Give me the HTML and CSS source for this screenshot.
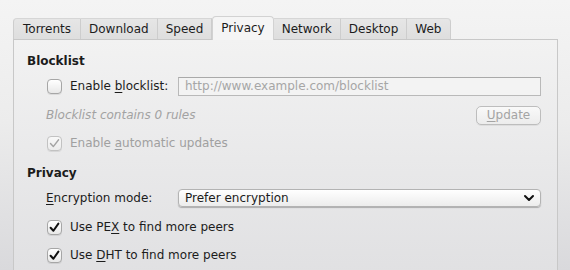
FILE: index.html
```html
<!DOCTYPE html>
<html>
    <head>
        <meta charset="UTF-8">
        <title>Preferences</title>
        <link rel="stylesheet" href="styles.css">
    </head>
    <body>
        <div class="tabs">
            <div class="tab first">Torrents</div>
            <div class="tab">Download</div>
            <div class="tab">Speed</div>
            <div class="tab active">Privacy</div>
            <div class="tab">Network</div>
            <div class="tab">Desktop</div>
            <div class="tab last">Web</div>
        </div>
        <div class="pane">
            <div class="title">Blocklist</div>
            <div class="row tall">
                <label class="lbl check">
                    <span class="box"></span>
                    <span>Enable <u>b</u>locklist:</span>
                </label>
                <div class="field">http://www.example.com/blocklist</div>
            </div>
            <div class="row">
                <span class="info">Blocklist contains 0 rules</span>
                <span class="btn"><u>U</u>pdate</span>
            </div>
            <div class="row">
                <label class="check off">
                    <span class="box on">
                        <svg viewBox="0 0 15 15" width="15" height="15"><path d="M3.5 7.6 L6.3 10.6 L11.6 3.8" fill="none" stroke="#a3a3a3" stroke-width="1.4" stroke-linecap="round" stroke-linejoin="round"/></svg>
                    </span>
                    <span>Enable <u>a</u>utomatic updates</span>
                </label>
            </div>
            <div class="title second">Privacy</div>
            <div class="row tall">
                <span class="lbl"><u>E</u>ncryption mode:</span>
                <div class="combo">
                    <span>Prefer encryption</span>
                    <svg viewBox="0 0 12 8" width="12" height="8"><path d="M2 2 L6 6 L10 2" fill="none" stroke="#111" stroke-width="2" stroke-linecap="round" stroke-linejoin="round"/></svg>
                </div>
            </div>
            <div class="row">
                <label class="check">
                    <span class="box on">
                        <svg viewBox="0 0 15 15" width="15" height="15"><path d="M3.6 7.8 L6.4 10.8 L11.4 3.6" fill="none" stroke="#111" stroke-width="2" stroke-linecap="round" stroke-linejoin="round"/></svg>
                    </span>
                    <span>Use PE<u>X</u> to find more peers</span>
                </label>
            </div>
            <div class="row">
                <label class="check">
                    <span class="box on">
                        <svg viewBox="0 0 15 15" width="15" height="15"><path d="M3.6 7.8 L6.4 10.8 L11.4 3.6" fill="none" stroke="#111" stroke-width="2" stroke-linecap="round" stroke-linejoin="round"/></svg>
                    </span>
                    <span>Use <u>D</u>HT to find more peers</span>
                </label>
            </div>
        </div>
    </body>
</html>
```

FILE: styles.css
```css
*{
    margin:0;
    padding:0;
    box-sizing:border-box;
}
html,body{
    height:100%;
}
body{
    font-family:"DejaVu Sans",sans-serif;
    font-size:12px;
    color:#1c1c1c;
    background:linear-gradient(#f4f4f4,#ececec 45%,#d9d9dc);
    overflow:hidden;
}
u{
    text-decoration:underline;
    text-underline-offset:2px;
}
.tabs{
    display:flex;
    align-items:flex-end;
    padding-left:13px;
    margin-top:15px;
    height:24px;
}
.tab{
    height:21px;
    line-height:21px;
    padding:0 8px;
    background:linear-gradient(#e6e6e6,#dedede);
    border-top:1px solid #d6d6d6;
    border-right:1px solid #cdcdcd;
}
.tab.first{
    padding:0 9px;
    border-left:1px solid #cdcdcd;
    border-top-left-radius:4px;
}
.tab.last{
    border-top-right-radius:4px;
}
.tab.active{
    height:24px;
    line-height:23px;
    background:#f5f5f5;
    border:1px solid #d2d2d2;
    border-bottom:none;
    border-radius:4px 4px 0 0;
    margin-bottom:-1px;
    position:relative;
    z-index:1;
}
.pane{
    margin:0 12px 0 13px;
    border:1px solid #c8c8c8;
    border-bottom:none;
    height:240px;
    padding:11px 16px 0 13px;
    background:linear-gradient(#f2f2f2,#e0e0e2);
}
.title{
    height:20px;
    line-height:20px;
    font-weight:bold;
}
.title.second{
    margin-top:6px;
}
.row{
    display:flex;
    align-items:center;
    height:28px;
    padding-left:19px;
}
.row.tall{
    height:30px;
}
.lbl{
    width:132px;
    flex:none;
}
.check{
    display:flex;
    align-items:center;
    gap:8px;
    margin-left:1px;
}
.row.tall .check{
    width:131px;
}
.box{
    width:15px;
    height:15px;
    border:1px solid #a6a6a6;
    border-radius:4px;
    background:linear-gradient(#ffffff,#e8e8e8);
    box-shadow:0 1px 0 rgba(0,0,0,0.08);
    position:relative;
}
.box svg{
    position:absolute;
    left:-1px;
    top:-1px;
}
.off{
    color:#a0a0a0;
}
.off .box{
    border-color:#c2c2c2;
    background:linear-gradient(#f8f8f8,#ececec);
}
.field{
    flex:1;
    height:19px;
    line-height:17px;
    padding-left:6px;
    border:1px solid #b9b9b9;
    border-top-color:#a9a9a9;
    background:#f3f3f3;
    color:#a6a6a6;
}
.info{
    flex:1;
    font-style:italic;
    color:#a2a2a2;
}
.btn{
    width:65px;
    height:19px;
    line-height:17px;
    text-align:center;
    border:1px solid #bdbdbd;
    border-radius:5px;
    background:linear-gradient(#f9f9f9,#ececec);
    color:#a4a4a4;
    box-shadow:0 1px 0 rgba(0,0,0,0.06);
}
.combo{
    flex:1;
    height:18px;
    display:flex;
    align-items:center;
    justify-content:space-between;
    padding:0 5px 0 6px;
    border:1px solid #b3b3b3;
    border-radius:4px;
    background:linear-gradient(#ffffff,#ececec);
    box-shadow:0 1px 1px rgba(0,0,0,0.25);
}
```
